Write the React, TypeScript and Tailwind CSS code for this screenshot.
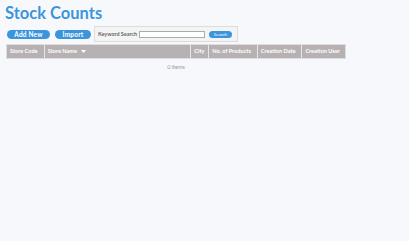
import React from 'react';

const columns = [
  { label: 'Store Code', w: 'w-[37px]' },
  { label: 'Store Name', w: 'w-[148px]', sort: true },
  { label: 'City', w: 'w-[18px]' },
  { label: 'No. of Products', w: 'w-[49px]' },
  { label: 'Creation Date', w: 'w-[45px]' },
  { label: 'Creation User', w: 'w-[44px]' },
];

export default function App() {
  return (
    <div className="w-[409px] h-[241px] bg-[#f7f8fc] font-['Lato',sans-serif] overflow-hidden">
      <h1 className="pl-[5px] pt-[2px] text-[16.5px] leading-[22px] font-bold text-[#3b95dc]">
        Stock Counts
      </h1>

      <div className="flex items-center mt-[2px] pl-[7px] h-[16px]">
        <button className="w-[43px] h-[9px] rounded-full bg-[#3b95dc] text-white text-[6.5px] leading-[9px] font-bold tracking-[0.2px]">
          Add New
        </button>
        <button className="ml-[5px] w-[36px] h-[9px] rounded-full bg-[#3b95dc] text-white text-[6.5px] leading-[9px] font-bold tracking-[0.2px]">
          Import
        </button>
        <div className="ml-[3px] w-[144px] h-[16px] flex items-center border border-[#dcdcdc] bg-[#f4f4f5] pl-[3px]">
          <span className="text-[5.4px] text-[#666] font-bold whitespace-nowrap">Keyword Search</span>
          <div className="ml-[2px] w-[66px] h-[7px] bg-white border border-[#aaa]" />
          <button className="ml-[4px] w-[23px] h-[7px] rounded-full bg-[#3b95dc] text-white text-[4.5px] leading-[7px]">
            Search
          </button>
        </div>
      </div>

      <div className="flex mt-[2px] ml-[6px] h-[15px] w-[340px] bg-[#b8b1b3] border border-[#ddd]">
        {columns.map((c, i) => (
          <div
            key={c.label}
            className={`${c.w} ${i > 0 ? 'border-l border-[#e6e6e6]' : ''} flex items-center px-[3px] text-white text-[5.6px] font-bold whitespace-nowrap`}
          >
            {c.label}
            {c.sort && (
              <svg className="ml-[4px]" width="5" height="3" viewBox="0 0 5 3">
                <path d="M0 0 L5 0 L2.5 3 Z" fill="white" />
              </svg>
            )}
          </div>
        ))}
      </div>

      <div className="ml-[6px] w-[340px] text-center text-[5.5px] text-[#999] mt-[4px]">0 items</div>
    </div>
  );
}
